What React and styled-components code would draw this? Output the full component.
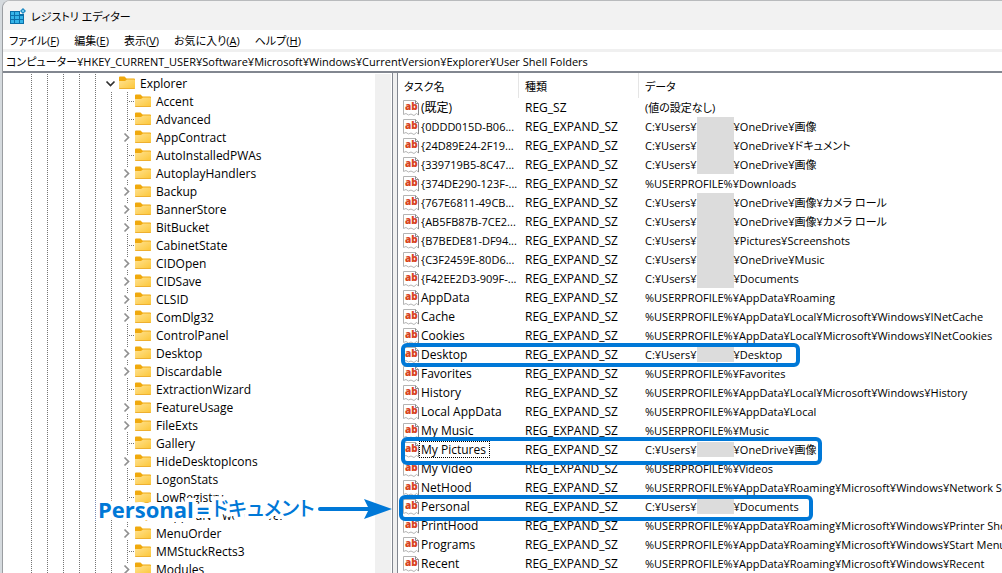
import React from "react";
import styled, { createGlobalStyle } from "styled-components";

const GlobalStyle = createGlobalStyle`
  * {
    box-sizing: border-box;
  }
  body {
    margin: 0;
    height: 100vh;
    overflow: hidden;
    background: #d5dade;
    color: #000;
    font-family: "Open Sans", "Noto Sans CJK JP", sans-serif;
    font-size: 12px;
    font-feature-settings: "palt";
  }
  #root {
    height: 100%;
  }
`;

const Window = styled.div`
  height: 100%;
  margin-left: 2px;
  display: flex;
  flex-direction: column;
  background: #fff;
  border-left: 1px solid #9a9da1;
  border-top: 1px solid #b9bbbd;
  border-top-left-radius: 8px;
  overflow: hidden;
`;

const TitleBar = styled.header`
  flex: none;
  height: 29px;
  padding-left: 7px;
  display: flex;
  align-items: center;
  gap: 5px;
  background: #f2f2f2;
`;

const Title = styled.h1`
  margin: 0;
  font-size: 11px;
  font-weight: 400;
`;

const MenuBar = styled.nav`
  flex: none;
  height: 19px;
  padding-left: 6px;
  display: flex;
  align-items: center;
  gap: 15px;
  font-size: 11px;
`;

const MenuButton = styled.button`
  padding: 0;
  border: 0;
  background: none;
  color: inherit;
  font: inherit;
  font-feature-settings: inherit;
  white-space: nowrap;
`;

const AddressBar = styled.input`
  flex: none;
  width: 100%;
  height: 22px;
  padding: 0 3px 2px;
  border: 0;
  border-top: 3px solid #f0f0f0;
  background: #fff;
  color: inherit;
  font: inherit;
  font-feature-settings: inherit;
  font-size: 11px;
  outline: none;
`;

const Panes = styled.main`
  flex: 1;
  min-height: 0;
  display: grid;
  grid-template-columns: 390px minmax(0, 1fr);
  column-gap: 4px;
  background: #f0f0f0;
  border-top: 2px solid #828790;
`;

const TreePane = styled.section`
  position: relative;
  display: flex;
  min-width: 0;
  min-height: 0;
  background: #fff;
  border-right: 1px solid #828790;
`;

const ListPane = styled.section`
  position: relative;
  min-width: 0;
  min-height: 0;
  background: #fff;
  border-left: 1px solid #828790;
`;

const Tree = styled.ul`
  flex: 1;
  margin: 1px 0 0;
  padding: 0;
  list-style: none;
  overflow: hidden;
`;

const ScrollTrack = styled.div`
  width: 16px;
  margin: 1px 1px 0 0;
  background: #f0f0f0;
`;

const TreeRow = styled.li`
  height: 18px;
  padding-left: 20px;
  display: flex;
  align-items: center;
  white-space: nowrap;
`;

const Guide = styled.span`
  flex: none;
  width: 16px;
  height: 18px;
  background: repeating-linear-gradient(#757575 0 1px, transparent 1px 2px) 8px 0 /
    1px 100% no-repeat;
`;

const Branch = styled(Guide)`
  display: flex;
  align-items: center;
  background-image: ${({ $expander }) =>
    $expander === "open"
      ? "none"
      : "repeating-linear-gradient(#757575 0 1px, transparent 1px 2px)"};

  &::after {
    content: "";
    width: 7px;
    height: 1px;
    margin-left: 9px;
    background: ${({ $expander }) =>
      $expander
        ? "none"
        : "repeating-linear-gradient(90deg, transparent 0 1px, #757575 1px 2px)"};
  }

  svg {
    flex: none;
    background: #fff;
  }
`;

const TreeLabel = styled.span`
  padding-left: 5px;
`;

const ValueTable = styled.table`
  width: 100%;
  table-layout: fixed;
  border-collapse: separate;
  border-spacing: 0;
`;

const HeadCell = styled.th`
  height: 25px;
  width: ${({ $width }) => $width || "auto"};
  padding: 0 0 0 6px;
  border-right: ${({ $width }) => ($width ? "1px solid #e5e5e5" : "0")};
  font-size: 11px;
  font-weight: 400;
  text-align: left;
`;

const Cell = styled.td`
  height: 19px;
  padding: 0 0 0 6px;
  overflow: hidden;
  white-space: nowrap;
  line-height: 19px;
`;

const NameCell = styled(Cell)`
  padding-left: 5px;
`;

const DataCell = styled(Cell)`
  font-size: 11px;
`;

const ValueName = styled.span`
  display: flex;
  align-items: center;
  height: 19px;

  svg {
    flex: none;
  }
`;

const ValueLabel = styled.span`
  height: 17px;
  padding: 0 ${({ $focused }) => ($focused ? "3px" : "0")} 0 1px;
  border: 1px ${({ $focused }) => ($focused ? "dotted #000" : "solid transparent")};
  font-size: ${({ $guid }) => ($guid ? "11px" : "12px")};
  line-height: 15px;
`;

const DataText = styled.span`
  display: flex;
  align-items: center;
`;

const Redacted = styled.span`
  flex: none;
  width: 37px;
  height: ${({ $short }) => ($short ? "15px" : "19px")};
  background: #dcdcdc;
`;

const Highlight = styled.div`
  position: absolute;
  top: ${({ $top }) => $top}px;
  left: ${({ $left }) => $left}px;
  width: ${({ $width }) => $width}px;
  height: ${({ $height }) => $height}px;
  border: 4px solid #0078d7;
  border-radius: 6px;
  pointer-events: none;
`;

const Callout = styled.p`
  position: absolute;
  top: 423px;
  left: 95px;
  margin: 0;
  display: flex;
  align-items: center;
  gap: 3px;
  color: #0078d7;
  font-size: 22px;
  font-weight: 700;
  line-height: 26px;
  white-space: nowrap;
  z-index: 1;
`;

// white halo that keeps the callout readable over the tree
const CalloutText = styled.span`
  font-size: ${({ $kana }) => ($kana ? "20px" : "22px")};
  font-weight: ${({ $kana }) => ($kana ? "500" : "700")};
  paint-order: stroke fill;
  -webkit-text-stroke: 8px #fff;
`;

const menus = [
  ["ファイル", "F"],
  ["編集", "E"],
  ["表示", "V"],
  ["お気に入り", "A"],
  ["ヘルプ", "H"],
];

const keys = [
  ["Accent"],
  ["Advanced"],
  ["AppContract", true],
  ["AutoInstalledPWAs"],
  ["AutoplayHandlers", true],
  ["Backup", true],
  ["BannerStore", true],
  ["BitBucket", true],
  ["CabinetState"],
  ["CIDOpen", true],
  ["CIDSave", true],
  ["CLSID", true],
  ["ComDlg32", true],
  ["ControlPanel"],
  ["Desktop", true],
  ["Discardable", true],
  ["ExtractionWizard"],
  ["FeatureUsage", true],
  ["FileExts", true],
  ["Gallery"],
  ["HideDesktopIcons", true],
  ["LogonStats"],
  ["LowRegistry"],
  ["MappedNetworkDrives"],
  ["MenuOrder", true],
  ["MMStuckRects3"],
  ["Modules", true],
];

// [name, data, whether a user name is hidden before data]
const values = [
  ["(既定)", "(値の設定なし)"],
  ["{0DDD015D-B06...", "¥OneDrive¥画像", true],
  ["{24D89E24-2F19...", "¥OneDrive¥ドキュメント", true],
  ["{339719B5-8C47...", "¥OneDrive¥画像", true],
  ["{374DE290-123F-...", "%USERPROFILE%¥Downloads"],
  ["{767E6811-49CB...", "¥OneDrive¥画像¥カメラ ロール", true],
  ["{AB5FB87B-7CE2...", "¥OneDrive¥画像¥カメラ ロール", true],
  ["{B7BEDE81-DF94...", "¥Pictures¥Screenshots", true],
  ["{C3F2459E-80D6...", "¥OneDrive¥Music", true],
  ["{F42EE2D3-909F-...", "¥Documents", true],
  ["AppData", "%USERPROFILE%¥AppData¥Roaming"],
  ["Cache", "%USERPROFILE%¥AppData¥Local¥Microsoft¥Windows¥INetCache"],
  ["Cookies", "%USERPROFILE%¥AppData¥Local¥Microsoft¥Windows¥INetCookies"],
  ["Desktop", "¥Desktop", true],
  ["Favorites", "%USERPROFILE%¥Favorites"],
  ["History", "%USERPROFILE%¥AppData¥Local¥Microsoft¥Windows¥History"],
  ["Local AppData", "%USERPROFILE%¥AppData¥Local"],
  ["My Music", "%USERPROFILE%¥Music"],
  ["My Pictures", "¥OneDrive¥画像", true],
  ["My Video", "%USERPROFILE%¥Videos"],
  ["NetHood", "%USERPROFILE%¥AppData¥Roaming¥Microsoft¥Windows¥Network Shortcuts"],
  ["Personal", "¥Documents", true],
  ["PrintHood", "%USERPROFILE%¥AppData¥Roaming¥Microsoft¥Windows¥Printer Shortcuts"],
  ["Programs", "%USERPROFILE%¥AppData¥Roaming¥Microsoft¥Windows¥Start Menu¥Programs"],
  ["Recent", "%USERPROFILE%¥AppData¥Roaming¥Microsoft¥Windows¥Recent"],
];

const RegeditIcon = () => (
  <svg width="16" height="16" viewBox="0 0 16 16" aria-hidden="true">
    <path d="M0 3h10v3h4v10H0z" fill="#0b6fa8" />
    <path
      d="M1 4h3v3H1zM5 4h4v3H5zM1 8h3v3H1zM5 8h4v3H5zM10 8h3v3h-3zM1 12h3v3H1zM5 12h4v3H5zM10 12h3v3h-3z"
      fill="#35b4e8"
    />
    <path d="M13 0l3 3-3 3-3-3z" fill="#1583bf" />
    <path d="M13 1.500l1.500 1.500-1.500 1.500-1.500-1.500z" fill="#7fd3f5" />
  </svg>
);

const FolderIcon = () => (
  <svg width="16" height="14" viewBox="0 0 16 14" aria-hidden="true">
    <defs>
      <linearGradient id="folder" x1="0" y1="0" x2="1" y2="1">
        <stop offset="0" stopColor="#ffe292" />
        <stop offset="1" stopColor="#fcc636" />
      </linearGradient>
    </defs>
    <path d="M0 1.500Q0 0.500 1 .5h4.500L7.500 2.500H15q1 0 1 1V6H0z" fill="#f0a90d" />
    <path d="M0 5h6l2-1.500h7q1 0 1 1V12q0 1-1 1H1q-1 0-1-1z" fill="url(#folder)" />
    <path d="M0 12h16q0 1-1 1H1q-1 0-1-1z" fill="#eeb030" />
  </svg>
);

const Chevron = ({ open }) => (
  <svg width="16" height="12" viewBox="0 0 16 12" aria-hidden="true">
    <path
      d={open ? "M3.500 4.500l4 4 4-4" : "M5.500 2.500l4 4-4 4"}
      fill="none"
      stroke={open ? "#303030" : "#8f8f8f"}
      strokeWidth="1.700"
    />
  </svg>
);

const StringIcon = () => (
  <svg width="16" height="16" viewBox="0 0 16 16" aria-hidden="true">
    <path
      d="M.5 .5h12l3 3v11.500l-2-1.500-2.500 2-3-1.500-2.500 1L3 13.500l-2.500 1z"
      fill="#fff"
      stroke="#b4b4b4"
    />
    <path d="M12.500.5v3h3v11.500" fill="none" stroke="#8c8c8c" />
    <text
      x="2"
      y="10"
      fill="#d8431f"
      fontFamily="Open Sans, sans-serif"
      fontSize="10"
      fontWeight="800"
    >
      ab
    </text>
  </svg>
);

const Arrow = () => (
  <svg width="74" height="22" viewBox="0 0 74 22" aria-hidden="true">
    <path d="M2 11h52" stroke="#0078d7" strokeWidth="4" strokeLinecap="round" />
    <path d="M46 1l28 10-28 10 5-10z" fill="#0078d7" />
  </svg>
);

const App = () => {
  return (
    <>
      <GlobalStyle />
      <Window>
        <TitleBar>
          <RegeditIcon />
          <Title>レジストリ エディター</Title>
        </TitleBar>
        <MenuBar>
          {menus.map(([label, key]) => (
            <MenuButton key={key}>
              {label}(<u>{key}</u>)
            </MenuButton>
          ))}
        </MenuBar>
        <AddressBar
          aria-label="アドレス"
          defaultValue="コンピューター¥HKEY_CURRENT_USER¥Software¥Microsoft¥Windows¥CurrentVersion¥Explorer¥User Shell Folders"
        />
        <Panes>
          <TreePane>
            <Tree>
              <TreeRow>
                {[0, 1, 2, 3, 4].map((n) => (
                  <Guide key={n} />
                ))}
                <Branch $expander="open">
                  <Chevron open />
                </Branch>
                <FolderIcon />
                <TreeLabel>Explorer</TreeLabel>
              </TreeRow>
              {keys.map(([name, hasChildren]) => (
                <TreeRow key={name}>
                  {[0, 1, 2, 3, 4, 5].map((n) => (
                    <Guide key={n} />
                  ))}
                  <Branch $expander={hasChildren ? "closed" : ""}>
                    {hasChildren && <Chevron />}
                  </Branch>
                  <FolderIcon />
                  <TreeLabel>{name}</TreeLabel>
                </TreeRow>
              ))}
            </Tree>
            <ScrollTrack />
            <Callout>
              <CalloutText>Personal</CalloutText>
              <CalloutText>=</CalloutText>
              <CalloutText $kana>ドキュメント</CalloutText>
              <Arrow />
            </Callout>
          </TreePane>
          <ListPane>
            <ValueTable>
              <thead>
                <tr>
                  <HeadCell $width="121px">タスク名</HeadCell>
                  <HeadCell $width="120px">種類</HeadCell>
                  <HeadCell>データ</HeadCell>
                </tr>
              </thead>
              <tbody>
                {values.map(([name, data, hidden]) => (
                  <tr key={name}>
                    <NameCell>
                      <ValueName>
                        <StringIcon />
                        <ValueLabel
                          $focused={name === "My Pictures"}
                          $guid={name.startsWith("{")}
                        >
                          {name}
                        </ValueLabel>
                      </ValueName>
                    </NameCell>
                    <Cell>{name === "(既定)" ? "REG_SZ" : "REG_EXPAND_SZ"}</Cell>
                    <DataCell>
                      <DataText>
                        {hidden && "C:¥Users¥"}
                        {hidden && <Redacted $short={!name.startsWith("{")} />}
                        {data}
                      </DataText>
                    </DataCell>
                  </tr>
                ))}
              </tbody>
            </ValueTable>
            <Highlight $top={270} $left={3} $width={399} $height={24} />
            <Highlight $top={364} $left={3} $width={421} $height={28} />
            <Highlight $top={422} $left={1} $width={414} $height={26} />
          </ListPane>
        </Panes>
      </Window>
    </>
  );
};

export default App;
